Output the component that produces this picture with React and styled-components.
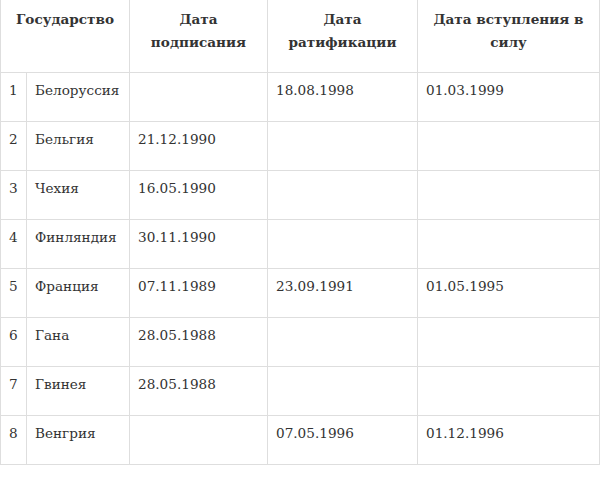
import React from "react";
import styled, { createGlobalStyle } from "styled-components";

const GlobalStyle = createGlobalStyle`
  html, body {
    margin: 0;
    padding: 0;
    background: #fff;
  }
`;

const Table = styled.table`
  border-collapse: collapse;
  width: 599px;
  font-family: "DejaVu Serif", "Liberation Serif", serif;
  font-size: 13.6px;
  color: #333;
  table-layout: fixed;
`;

const Col = styled.col`
  width: ${(p) => p.$w}px;
`;

const Head = styled.th`
  border: 1px solid #dedede;
  border-top: none;
  text-align: center;
  vertical-align: top;
  font-weight: bold;
  line-height: 23px;
  padding: 8px 8px 18px;
  height: 46px;
`;

const Cell = styled.td`
  border: 1px solid #dedede;
  vertical-align: top;
  text-align: left;
  padding: 6px 8px 0;
  height: 42px;
  line-height: 23px;
  white-space: nowrap;
`;

const widths = [26, 103, 138, 150, 182];

const rows = [
  ["1", "Белоруссия", "", "18.08.1998", "01.03.1999"],
  ["2", "Бельгия", "21.12.1990", "", ""],
  ["3", "Чехия", "16.05.1990", "", ""],
  ["4", "Финляндия", "30.11.1990", "", ""],
  ["5", "Франция", "07.11.1989", "23.09.1991", "01.05.1995"],
  ["6", "Гана", "28.05.1988", "", ""],
  ["7", "Гвинея", "28.05.1988", "", ""],
  ["8", "Венгрия", "", "07.05.1996", "01.12.1996"],
];

export default function App() {
  return (
    <>
      <GlobalStyle />
      <Table>
        <colgroup>
          {widths.map((w, i) => (
            <Col key={i} $w={w} />
          ))}
        </colgroup>
        <thead>
          <tr>
            <Head colSpan={2}>Государство</Head>
            <Head>Дата подписания</Head>
            <Head>Дата ратификации</Head>
            <Head>Дата вступления в силу</Head>
          </tr>
        </thead>
        <tbody>
          {rows.map((r) => (
            <tr key={r[0]}>
              {r.map((v, i) => (
                <Cell key={i}>{v}</Cell>
              ))}
            </tr>
          ))}
        </tbody>
      </Table>
    </>
  );
}
